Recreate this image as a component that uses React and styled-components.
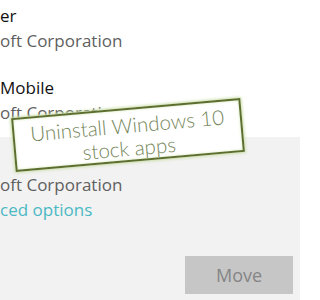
import React from "react";
import styled, { createGlobalStyle } from "styled-components";

const Global = createGlobalStyle`
  html, body { margin: 0; padding: 0; background: #ffffff; }
  body { width: 300px; height: 300px; overflow: hidden; position: relative; }
  #root { width: 300px; height: 300px; }
`;

const Page = styled.div`
  position: relative;
  width: 300px;
  height: 300px;
  overflow: hidden;
  font-family: "Open Sans", "Noto Sans", sans-serif;
  background: #ffffff;
`;

const List = styled.div`
  display: flex;
  flex-direction: column;
  margin-top: -7px;
`;

const Item = styled.div`
  display: flex;
  flex-direction: column;
  padding: 10px 0 ${(p) => (p.$selected ? "0" : "12px")} 0;
  background: ${(p) => (p.$selected ? "#f2f2f2" : "transparent")};
  min-height: ${(p) => (p.$selected ? "200px" : "auto")};
`;

const Name = styled.div`
  font-size: 17px;
  line-height: 25px;
  color: #111111;
  white-space: nowrap;
`;

const Publisher = styled.div`
  font-size: 17px;
  line-height: 25px;
  color: #5f5f5f;
  white-space: nowrap;
`;

const Link = styled.div`
  font-size: 17px;
  line-height: 25px;
  color: #4bb9c4;
  white-space: nowrap;
`;

const ButtonRow = styled.div`
  display: flex;
  justify-content: flex-end;
  padding-right: 7px;
  margin-top: 34px;
`;

const Button = styled.div`
  width: 108px;
  height: 38px;
  background: #c6c6c6;
  color: #858585;
  font-size: 18px;
  display: flex;
  align-items: center;
  justify-content: center;
`;

const Callout = styled.div`
  position: absolute;
  left: 13px;
  top: 108px;
  width: 230px;
  height: 54px;
  box-sizing: border-box;
  padding-top: 4px;
  border: 2px solid #5c6f2e;
  background: #ffffff;
  box-shadow: 0 0 3px 1px #c9dea6, inset 0 0 3px #d7e8bb;
  transform: rotate(-5deg);
  display: flex;
  flex-direction: column;
  align-items: center;
  justify-content: center;
  font-family: Lato, "DejaVu Sans", sans-serif;
  font-weight: 300;
  font-size: 20.5px;
  line-height: 23px;
  color: #75865a;
  text-align: center;
`;

export default function App() {
  return (
    <Page>
      <Global />
      <List>
        <Item>
          <Name>er</Name>
          <Publisher>oft Corporation</Publisher>
        </Item>
        <Item>
          <Name>Mobile</Name>
          <Publisher>oft Corporation</Publisher>
        </Item>
        <Item $selected>
          <Name>&nbsp;</Name>
          <Publisher>oft Corporation</Publisher>
          <Link>ced options</Link>
          <ButtonRow>
            <Button>Move</Button>
          </ButtonRow>
        </Item>
      </List>
      <Callout>
        <span>Uninstall Windows 10</span>
        <span>stock apps</span>
      </Callout>
    </Page>
  );
}
